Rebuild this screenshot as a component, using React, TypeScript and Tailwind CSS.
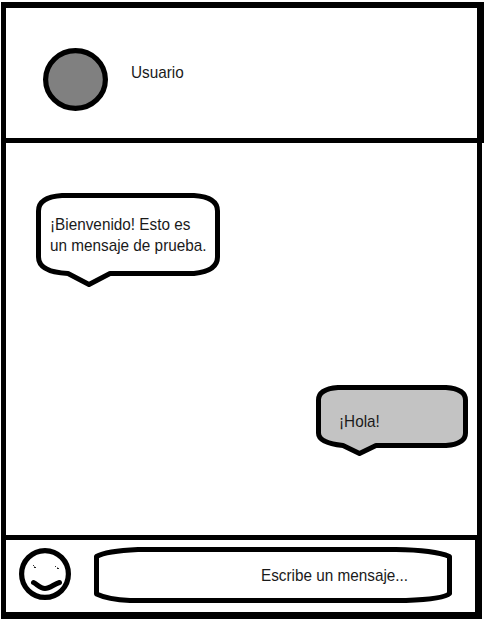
import type { ReactNode } from "react";

function Label({ children, className = "" }: { children: ReactNode; className?: string }) {
  return (
    <span
      className={`block origin-left whitespace-nowrap font-['Liberation_Sans',Arial,sans-serif] text-[17px] leading-[21px] text-[#1a1a1a] ${className}`}
    >
      {children}
    </span>
  );
}

function Outline({ width, height, d, fill }: { width: number; height: number; d: string; fill: string }) {
  return (
    <svg
      className="absolute left-0 top-0"
      width={width}
      height={height}
      viewBox={`0 0 ${width} ${height}`}
      aria-hidden="true"
    >
      <path d={d} fill={fill} stroke="#000" strokeWidth="5" strokeLinejoin="round" />
    </svg>
  );
}

function Smiley() {
  return (
    <svg width="52" height="52" viewBox="0 0 52 52" role="img" aria-label="Emoji">
      <circle cx="26" cy="26" r="23.4" fill="#fff" stroke="#000" strokeWidth="5.2" />
      <path d="M14 17h1v1h-1zM36 18h1v1h-1z" fill="#333" />
      <path d="M15 18h1v1h-1zM38 19h1v1h-1z" fill="#999" />
      <path d="M15 19h2v1h-2zM38 20h2v1h-2z" fill="#222" />
      <path d="M14.5 34.5C18 36 21 40.5 26 40.5S35 36 40.5 34.5" fill="none" stroke="#000" strokeWidth="5" strokeLinecap="round" />
    </svg>
  );
}

export default function App() {
  return (
    <div className="flex h-[621px] w-[486px] flex-col bg-white pl-px pt-0.5">
      <header className="flex h-[141px] w-[483px] border-y-[5px] border-l-[5px] border-r-[7px] border-t-[6px] border-black pl-[37px] pt-10">
        <svg width="65" height="63" viewBox="0 0 65 63" aria-hidden="true">
          <ellipse cx="32.5" cy="31.5" rx="29.9" ry="28.9" fill="#808080" stroke="#000" strokeWidth="5.2" />
        </svg>
        <Label className="ml-[23px] mt-[13.5px] scale-x-[.9]">Usuario</Label>
      </header>

      <main className="flex h-[392px] w-[481px] flex-col border-x-[5px] border-black pt-[50px]">
        <div className="relative ml-[30px] h-[95px] w-[184px] pl-[14px] pt-[21px]">
          <Outline
            width={184}
            height={95}
            fill="#fff"
            d="M26 2.5H158Q181.5 4 181.5 18V64Q181.5 78 158 80.5H74L53 91.5L32 80.5Q2.5 79 2.5 64V18Q2.5 4 26 2.5Z"
          />
          <Label className="relative scale-x-[.9]">¡Bienvenido! Esto es</Label>
          <Label className="relative scale-x-[.9]">un mensaje de prueba.</Label>
        </div>
        <div className="relative ml-[310px] mt-[97px] h-[72px] w-[152px] pl-[23px] pt-[26px]">
          <Outline
            width={152}
            height={72}
            fill="#c3c3c3"
            d="M22 2.5H130Q149.5 4 149.5 15V48Q149.5 59 130 60.5H60L43.5 68.5L27 60.5Q2.5 58 2.5 48V15Q2.5 4 22 2.5Z"
          />
          <Label className="relative scale-x-[.9]">¡Hola!</Label>
        </div>
      </main>

      <footer className="flex h-[84px] w-[481px] border-b-[7px] border-l-[5px] border-r-[7px] border-t-[5px] border-black pl-[13px] pt-[7px]">
        <div className="pt-px">
          <Smiley />
        </div>
        <div className="relative ml-[23px] h-14 w-[358px] pl-[167px] pt-[18px]">
          <Outline
            width={358}
            height={56}
            fill="#fff"
            d="M44 2.5H302Q340 3 355.5 9.5V46.5Q350 52 312 53.5H36Q14 52.5 2.5 47V9.5Q12 4 44 2.5Z"
          />
          <Label className="relative scale-x-[.9]">Escribe un mensaje...</Label>
        </div>
      </footer>
    </div>
  );
}
